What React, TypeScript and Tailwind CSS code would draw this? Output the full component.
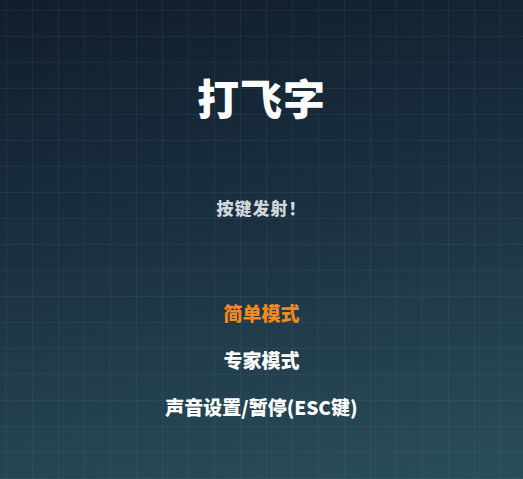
export default function App() {
  const menu = [
    { label: '简单模式', active: true },
    { label: '专家模式', active: false },
    { label: '声音设置/暂停(ESC键)', active: false },
  ];

  return (
    <div
      className="w-[523px] h-[479px] overflow-hidden flex flex-col items-center font-['Noto_Sans_CJK_SC','Noto_Sans',sans-serif] bg-[linear-gradient(rgba(130,180,200,0.08)_1px,transparent_1px),linear-gradient(90deg,rgba(130,180,200,0.08)_1px,transparent_1px),linear-gradient(170deg,#111d2b_0%,#1a3040_45%,#2b4e5a_100%)] bg-[size:26px_26px,26px_26px,100%_100%] bg-[position:6px_10px,6px_10px,0_0]"
    >
      {/* Title */}
      <h1 className="mt-[74px] text-[42px] leading-[46px] font-black text-white tracking-[1px]">
        打飞字
      </h1>

      <p className="mt-[77px] text-[17px] leading-[22px] font-extrabold text-[#d3d7da] tracking-[1px]">
        按键发射！
      </p>

      {/* Menu */}
      <ul className="mt-[82px] flex flex-col items-center gap-[23px]">
        {menu.map((item) => (
          <li
            key={item.label}
            className={`text-[19px] leading-[24px] font-extrabold ${
              item.active ? 'text-[#f28a1e]' : 'text-white'
            }`}
          >
            {item.label}
          </li>
        ))}
      </ul>
    </div>
  );
}
